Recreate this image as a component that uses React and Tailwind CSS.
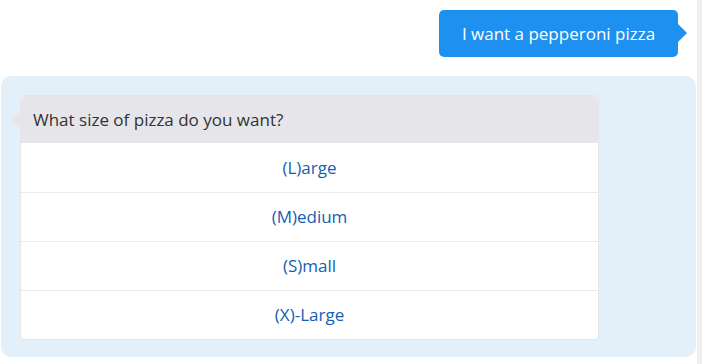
const options = ['(L)arge', '(M)edium', '(S)mall', '(X)-Large'];

export default function App() {
  return (
    <div className="flex h-[364px] w-[702px] bg-white" style={{ fontFamily: '"Open Sans", sans-serif' }}>
      <div className="flex-1 pl-px pr-px pt-[10px]">
        {/* outgoing message */}
        <div className="flex justify-end pr-[18px]">
          <div className="relative flex h-[47px] w-[239px] items-center justify-center rounded-[5px] bg-[#1e90f0] text-[17px] text-white">
            I want a pepperoni pizza
            <span className="absolute right-[-9px] top-[14px] h-0 w-0 border-y-[9px] border-l-[9px] border-y-transparent border-l-[#1e90f0]" />
          </div>
        </div>

        {/* bot reply */}
        <div className="mt-[19px] h-[281px] rounded-[10px] bg-[#e3f0f9] pl-[19px] pr-[97px] pt-[19px]">
          <div className="relative w-[579px] rounded-[5px] border border-[#e4e4ea] bg-white">
            <span className="absolute left-[-10px] top-[14px] h-0 w-0 border-y-[10px] border-r-[10px] border-y-transparent border-r-[#e5e5ea]" />
            <div className="flex h-[47px] items-center rounded-t-[5px] bg-[#e5e5ea] px-3 text-[17px] text-[#333]">
              What size of pizza do you want?
            </div>
            {options.map((o, i) => (
              <div
                key={o}
                className={`flex h-[49px] items-center justify-center text-[17px] text-[#1560b0] ${i > 0 ? 'border-t border-[#eaeaea]' : ''}`}
              >
                {o}
              </div>
            ))}
          </div>
        </div>
      </div>
      <div className="w-[5px] bg-[#f0f0f0]" />
    </div>
  );
}
